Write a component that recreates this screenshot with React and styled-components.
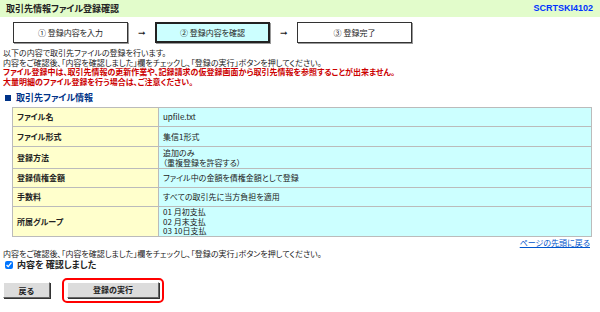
import React from "react";
import styled, { createGlobalStyle } from "styled-components";

const GlobalStyle = createGlobalStyle`
  body {
    margin: 0;
    background: #fff;
    font-family: "Noto Sans CJK JP", "Liberation Sans", sans-serif;
    font-size: 8px;
    line-height: 9.5px;
    color: #222;
    font-feature-settings: "palt";
  }
`;

const Page = styled.div`
  width: 600px;
  height: 312px;
  overflow: hidden;
`;

const Header = styled.div`
  height: 17px;
  background: #e2fccb;
  display: flex;
  align-items: center;
  justify-content: space-between;
  padding: 0 7px 0 6px;
`;

const Title = styled.h1`
  margin: 0;
  font-size: 9px;
  font-weight: bold;
  color: #222;
`;

const ScreenId = styled.span`
  font-family: "Liberation Sans", sans-serif;
  font-size: 9px;
  font-weight: bold;
  color: #0033ff;
`;

const Steps = styled.div`
  display: flex;
  align-items: center;
  padding: 5px 0 0 13px;
`;

const Step = styled.div`
  width: 115px;
  height: 21px;
  box-sizing: border-box;
  display: flex;
  align-items: center;
  justify-content: center;
  border: ${(p) => (p.$active ? "2px solid #222" : "1px solid #333")};
  background: ${(p) => (p.$active ? "#ccffff" : "#fff")};
  box-shadow: 1px 1px 0 #999;
`;

const Arrow = styled.span`
  width: 27px;
  text-align: center;
  font-size: 9px;
`;

const Intro = styled.div`
  padding: 5px 0 0 3px;
`;

const Warn = styled.div`
  color: #cc0000;
  font-weight: bold;
`;

const SectionTitle = styled.h2`
  margin: 7px 0 0 5px;
  display: flex;
  align-items: center;
  gap: 5px;
  font-size: 9px;
  line-height: 10px;
  font-weight: bold;
  color: #003388;
  &::before {
    content: "";
    width: 6px;
    height: 6px;
    background: #003388;
  }
`;

const Table = styled.table`
  margin: 4px 0 0 12px;
  width: 580px;
  border-collapse: collapse;
  border: 1px solid #bbb;
`;

const Row = styled.tr`
  height: ${(p) => p.$h}px;
`;

const Label = styled.th`
  width: 137px;
  background: #ffffcc;
  border: 1px solid #bbb;
  text-align: left;
  font-weight: bold;
  padding: 0 4px;
`;

const Value = styled.td`
  background: #ccffff;
  border: 1px solid #bbb;
  padding: 0 4px;
`;

const TopLink = styled.div`
  width: 590px;
  text-align: right;
  margin-top: 1px;
  a {
    color: #0055cc;
    text-decoration: underline;
  }
`;

const Confirm = styled.div`
  padding: 2px 0 0 3px;
`;

const CheckRow = styled.label`
  display: flex;
  align-items: center;
  gap: 4px;
  padding: 1px 0 0 5px;
  font-size: 9px;
  line-height: 10px;
  font-weight: bold;
  input {
    margin: 0;
    width: 8px;
    height: 8px;
  }
`;

const Buttons = styled.div`
  display: flex;
  align-items: center;
  gap: 12px;
  padding: 8px 0 0 3px;
`;

const Button = styled.button`
  width: ${(p) => p.$w}px;
  height: 16px;
  padding: 0;
  font-family: inherit;
  font-size: 8px;
  line-height: 9px;
  font-weight: bold;
  color: #222;
  background: #dcdcdc;
  border: 1px solid;
  border-color: #fff #666 #666 #fff;
  box-shadow: 1px 1px 0 #333;
`;

const Highlight = styled.div`
  display: flex;
  padding: 2px 3px 3px;
  border: 2px solid #ff0000;
  border-radius: 5px;
`;

const rows = [
  ["ファイル名", ["upfile.txt"], 19],
  ["ファイル形式", ["集信1形式"], 20],
  ["登録方法", ["追加のみ", "（重複登録を許容する）"], 22],
  ["登録債権金額", ["ファイル中の金額を債権金額として登録"], 19],
  ["手数料", ["すべての取引先に当方負担を適用"], 19],
  ["所属グループ", ["01 月初支払", "02 月末支払", "03 10日支払"], 29],
];

export default function App() {
  return (
    <Page>
      <GlobalStyle />
      <Header>
        <Title>取引先情報ファイル登録確認</Title>
        <ScreenId>SCRTSKI4102</ScreenId>
      </Header>
      <Steps>
        <Step>① 登録内容を入力</Step>
        <Arrow>➞</Arrow>
        <Step $active>② 登録内容を確認</Step>
        <Arrow>➞</Arrow>
        <Step>③ 登録完了</Step>
      </Steps>
      <Intro>
        <div>以下の内容で取引先ファイルの登録を行います。</div>
        <div>
          内容をご確認後、「内容を確認しました」欄をチェックし、「登録の実行」ボタンを押してください。
        </div>
        <Warn>
          ファイル登録中は、取引先情報の更新作業や、記録請求の仮登録画面から取引先情報を参照することが出来ません。
        </Warn>
        <Warn>大量明細のファイル登録を行う場合は、ご注意ください。</Warn>
      </Intro>
      <SectionTitle>取引先ファイル情報</SectionTitle>
      <Table>
        <tbody>
          {rows.map(([label, lines, h]) => (
            <Row key={label} $h={h}>
              <Label>{label}</Label>
              <Value>
                {lines.map((l) => (
                  <div key={l}>{l}</div>
                ))}
              </Value>
            </Row>
          ))}
        </tbody>
      </Table>
      <TopLink>
        <a href="#top">ページの先頭に戻る</a>
      </TopLink>
      <Confirm>
        内容をご確認後、「内容を確認しました」欄をチェックし、「登録の実行」ボタンを押してください。
      </Confirm>
      <CheckRow>
        <input type="checkbox" defaultChecked />
        内容を 確認しました
      </CheckRow>
      <Buttons>
        <Button $w={47}>戻る</Button>
        <Highlight>
          <Button $w={92}>登録の実行</Button>
        </Highlight>
      </Buttons>
    </Page>
  );
}
